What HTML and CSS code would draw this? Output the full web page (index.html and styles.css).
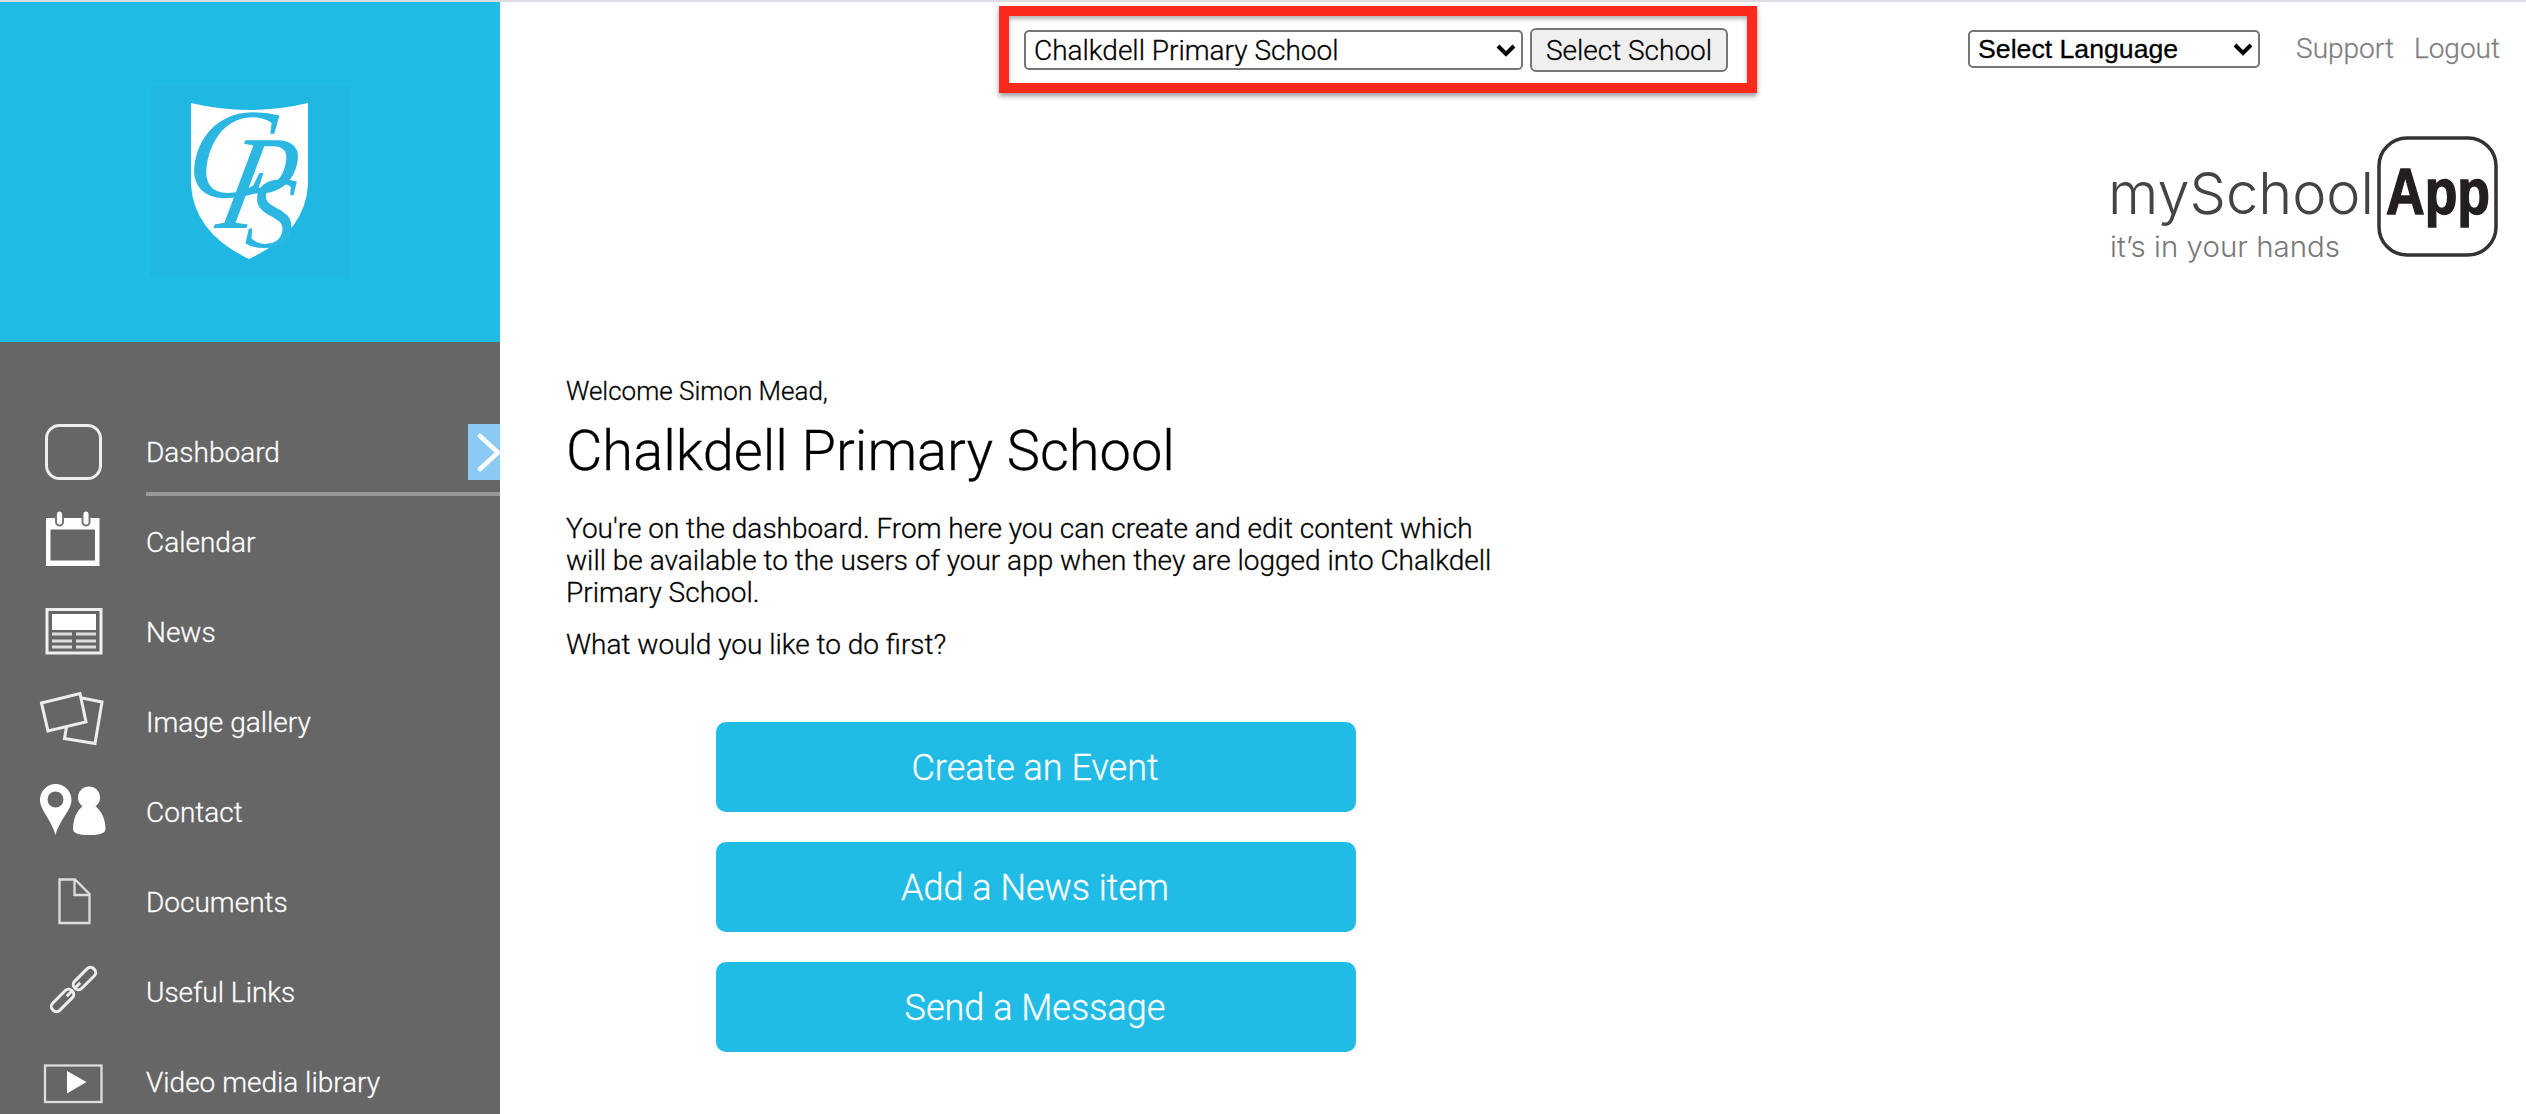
FILE: index.html
```html
<!DOCTYPE html>
<html lang="en">
<head>
<meta charset="utf-8">
<title>mySchoolApp - Dashboard</title>
<link rel="stylesheet" href="styles.css">
</head>
<body>

<div class="page">
  <aside class="sidebar">
    <div class="school-logo">
      <svg class="badge" viewBox="0 0 200 190" width="200" height="190">
        <path fill="#fff" d="M41 17 Q99 31 158 17 V99 Q155 147 99 173 Q44 147 41 99 Z"/>
        <g class="monogram">
          <text transform="translate(33 111) scale(1.26 1.28) skewX(-8)" font-size="100">C</text>
          <text transform="translate(64 142) scale(1.18 1.34) skewX(-14)" font-size="100">P</text>
          <text transform="translate(94 161) scale(1.02 1.04) skewX(-4)" font-size="98">S</text>
        </g>
      </svg>
    </div>

    <nav class="menu">
      <a class="menu-item active" href="#dashboard">
        <svg class="icon" viewBox="0 0 80 90"><rect class="line" x="10.5" y="18.5" width="54" height="53" rx="13"/></svg>
        <span class="label">Dashboard
          <svg class="arrow" viewBox="0 0 32 56"><path d="M12 12 L30 28.5 L12 45"/></svg>
        </span>
      </a>
      <a class="menu-item" href="#calendar">
        <svg class="icon" viewBox="0 0 80 90">
          <path class="solid" fill-rule="evenodd" d="M10 21 H63.500 V69 H10 Z M14.500 32.500 V63.500 H59 V32.500 Z"/>
          <path class="ring-gap" d="M23.500 21 V25 M50 21 V25"/>
          <path class="ring" d="M23.500 17 V25 M50 17 V25"/>
        </svg>
        <span class="label">Calendar</span>
      </a>
      <a class="menu-item" href="#news">
        <svg class="icon" viewBox="0 0 80 90">
          <rect class="line" x="11" y="22.500" width="54" height="43.500"/>
          <path class="solid" d="M16 27 H60 V43 H16 Z"/>
          <path class="thin" d="M16 47 H36 M40 47 H60 M16 54 H36 M40 54 H60 M16 60 H36 M40 60 H60"/>
        </svg>
        <span class="label">News</span>
      </a>
      <a class="menu-item" href="#gallery">
        <svg class="icon" viewBox="0 0 80 90">
          <path class="line" d="M5.500 26 L44 16.500 L50 45 L12 54 Z M46 21 L66 25 L59 66.500 L28.500 61.500 L30.500 50"/>
        </svg>
        <span class="label">Image gallery</span>
      </a>
      <a class="menu-item" href="#contact">
        <svg class="icon" viewBox="0 0 80 90">
          <path class="solid" fill-rule="evenodd" d="M19.500 17 C28.500 17 35.500 24 35.500 33 C35.500 43 24 52 19.500 68 C15 52 4 43 4 33 C4 24 11 17 19.500 17 Z M19.500 24.500 A8 8 0 1 0 19.500 40.500 A8 8 0 1 0 19.500 24.500 Z"/>
          <circle class="solid" cx="53" cy="30.500" r="11"/>
          <path class="solid" d="M47 39 H59 C65 43 69.500 52 69.500 62 Q69.500 68 53 68 Q37 68 37 62 C37 52 41 43 47 39 Z"/>
        </svg>
        <span class="label">Contact</span>
      </a>
      <a class="menu-item" href="#documents">
        <svg class="icon" viewBox="0 0 80 90">
          <path class="line fine" d="M23.500 22.500 H39 L53.500 37 V66 H23.500 Z M38.500 22.500 V38 H53.500"/>
        </svg>
        <span class="label">Documents</span>
      </a>
      <a class="menu-item" href="#links">
        <svg class="icon" viewBox="0 0 80 90">
          <g class="line" transform="rotate(-45 37.500 42.500)">
            <rect x="8.500" y="37.500" width="27" height="10" rx="4.500"/>
            <rect x="39.500" y="37.500" width="27" height="10" rx="4.500"/>
            <path d="M28 42.500 H35 M40 42.500 H47"/>
          </g>
        </svg>
        <span class="label">Useful Links</span>
      </a>
      <a class="menu-item" href="#video">
        <svg class="icon" viewBox="0 0 80 90">
          <rect class="line fine" x="9" y="28.500" width="56.500" height="36.500"/>
          <path class="solid" d="M31 34 L50.500 45 L31 56.500 Z"/>
        </svg>
        <span class="label">Video media library</span>
      </a>
    </nav>
  </aside>

  <main class="main">
    <header class="topbar">
      <form class="school-picker">
        <span class="select school">
          <select><option>Chalkdell Primary School</option></select>
          <svg class="caret" viewBox="0 0 20 14"><path d="M2 3 L10 11 L18 3"/></svg>
        </span>
        <button class="select-button" type="button">Select School</button>
      </form>
      <div class="account">
        <span class="select language">
          <select><option>Select Language</option></select>
          <svg class="caret" viewBox="0 0 20 14"><path d="M2 3 L10 11 L18 3"/></svg>
        </span>
        <a class="support" href="#support">Support</a>
        <a href="#logout">Logout</a>
      </div>
    </header>

    <div class="brand">
      <svg viewBox="0 0 400 145" width="400" height="145">
        <text class="brand-name" x="8" y="84" textLength="266" lengthAdjust="spacingAndGlyphs">mySchool</text>
        <rect class="brand-box" x="279" y="8" width="117" height="117" rx="28"/>
        <text class="brand-app" x="286" y="84" textLength="104" lengthAdjust="spacingAndGlyphs">App</text>
        <text class="brand-tag" x="10" y="127" textLength="230" lengthAdjust="spacingAndGlyphs">it’s in your hands</text>
      </svg>
    </div>

    <section class="content">
      <p class="welcome">Welcome Simon Mead,</p>
      <h1>Chalkdell Primary School</h1>
      <p class="intro">You're on the dashboard. From here you can create and edit content which will be available to the users of your app when they are logged into Chalkdell Primary School.</p>
      <p class="intro">What would you like to do first?</p>
      <div class="actions">
        <a href="#event">Create an Event</a>
        <a href="#item">Add a News item</a>
        <a href="#message">Send a Message</a>
      </div>
    </section>
  </main>
</div>

</body>
</html>
```
FILE: styles.css
```css
* {
  box-sizing: border-box;
}

body {
  margin: 0;
  height: 1114px;
  overflow: hidden;
  border-top: 2px solid #dddce2;
  background-color: #fff;
  color: #000;
  font-family: Roboto, "Liberation Sans", sans-serif;
  font-size: 28px;
  font-weight: 300;
  -webkit-text-stroke: 0.3px;
}

a {
  text-decoration: none;
}

.page {
  display: flex;
  height: 1112px;
}

/* Sidebar */
.sidebar {
  width: 500px;
  flex: none;
  overflow: hidden;
  background-color: #666;
}

.school-logo {
  display: flex;
  justify-content: center;
  height: 340px;
  padding-top: 84px;
  background-color: #20bce5;
}

.badge {
  overflow: visible;
  background-color: #20b8e2;
}

.monogram {
  fill: #2bb7e2;
  font-family: "Liberation Serif", serif;
  font-style: italic;
  font-weight: 400;
  -webkit-text-stroke: 0;
}

.menu {
  padding-top: 65px;
}

.menu-item {
  display: flex;
  gap: 30px;
  height: 90px;
  padding-left: 36px;
  color: #fff;
  line-height: 92px;
}

.icon {
  width: 80px;
  height: 90px;
  flex: none;
}

.label {
  display: flex;
  flex: 1;
  justify-content: space-between;
  align-items: flex-start;
  height: 89px;
}

.active .label {
  border-bottom: 4px solid #999;
}

.arrow {
  width: 32px;
  height: 56px;
  margin-top: 17px;
  background-color: #8acaf3;
  fill: none;
  stroke: #fff;
  stroke-width: 4.5;
  stroke-linecap: round;
}

.solid {
  fill: #fff;
}

.line {
  fill: none;
  stroke: #eee;
  stroke-width: 3;
}

.fine {
  stroke: #ddd;
  stroke-width: 2.3;
}

.thin {
  stroke: #ddd;
  stroke-width: 3;
}

.ring {
  stroke: #fff;
  stroke-width: 5;
  stroke-linecap: round;
}

.ring-gap {
  stroke: #777;
  stroke-width: 9;
  stroke-linecap: round;
}

/* Top bar */
.main {
  flex: 1;
}

.topbar {
  display: flex;
  justify-content: space-between;
  height: 132px;
  padding: 4px 26px 0 499px;
}

.school-picker {
  display: flex;
  align-items: center;
  gap: 7px;
  width: 758px;
  height: 87px;
  padding: 1px 0 0 15px;
  border: 10px solid #fc2a1c;
  box-shadow: 0 3px 5px rgba(0, 0, 0, 0.4), inset 0 3px 4px rgba(0, 0, 0, 0.3);
}

.select {
  display: inline-grid;
  grid-template-rows: 100%;
  align-items: center;
}

.select select,
.select .caret {
  grid-area: 1 / 1;
}

.select select {
  appearance: none;
  width: 100%;
  height: 100%;
  margin: 0;
  padding: 0 8px;
  border: 2px solid #767676;
  border-radius: 5px;
  background-color: #fff;
  color: #000;
  font: inherit;
  line-height: normal;
}

.caret {
  justify-self: end;
  width: 20px;
  height: 14px;
  margin-right: 7px;
  fill: none;
  stroke: #000;
  stroke-width: 4;
  pointer-events: none;
}

.school {
  width: 499px;
  height: 40px;
}

.select-button {
  width: 198px;
  height: 44px;
  padding: 0;
  border: 2px solid #767676;
  border-radius: 6px;
  background-color: #efefef;
  color: #000;
  font: inherit;
}

.account {
  display: flex;
  height: 38px;
  margin-top: 24px;
  line-height: 38px;
}

.account a {
  color: #808080;
}

.language {
  width: 292px;
  height: 38px;
  margin-right: 36px;
  font-family: "Liberation Sans", Arial, sans-serif;
  font-size: 26.67px;
  font-weight: 400;
}

.support {
  margin-right: 20px;
}

/* Logo on the right */
.brand {
  display: flex;
  justify-content: flex-end;
  height: 130px;
  margin-top: -4px;
  padding-right: 26px;
  -webkit-text-stroke: 0;
}

.brand svg {
  flex: none;
}

.brand-name {
  fill: #444;
  font-family: Inter, sans-serif;
  font-size: 58px;
  font-weight: 300;
}

.brand-box {
  fill: none;
  stroke: #333;
  stroke-width: 3.5;
}

.brand-app {
  fill: #231f20;
  font-family: "Liberation Sans", sans-serif;
  font-size: 64px;
  font-weight: 700;
  stroke: #231f20;
  stroke-width: 1.5;
}

.brand-tag {
  fill: #777;
  font-family: Inter, sans-serif;
  font-size: 28px;
  font-weight: 300;
}

/* Dashboard */
.content {
  width: 1006px;
  padding: 115px 0 0 66px;
}

.content p,
.content h1 {
  margin: 0;
}

.welcome {
  font-size: 26px;
  line-height: 32px;
}

.content h1 {
  margin-top: 10px;
  font-size: 56px;
  font-weight: 300;
  line-height: 68px;
}

.content .intro {
  margin-bottom: 20px;
  line-height: 32px;
}

h1 + .intro {
  padding-top: 28px;
}

.actions {
  display: flex;
  flex-direction: column;
  gap: 30px;
  width: 640px;
  margin: 61px 0 0 150px;
}

.actions a {
  height: 90px;
  padding-right: 2px;
  border-radius: 10px;
  background-color: #20bce5;
  color: #fff;
  font-size: 36px;
  line-height: 92px;
  text-align: center;
}
```
